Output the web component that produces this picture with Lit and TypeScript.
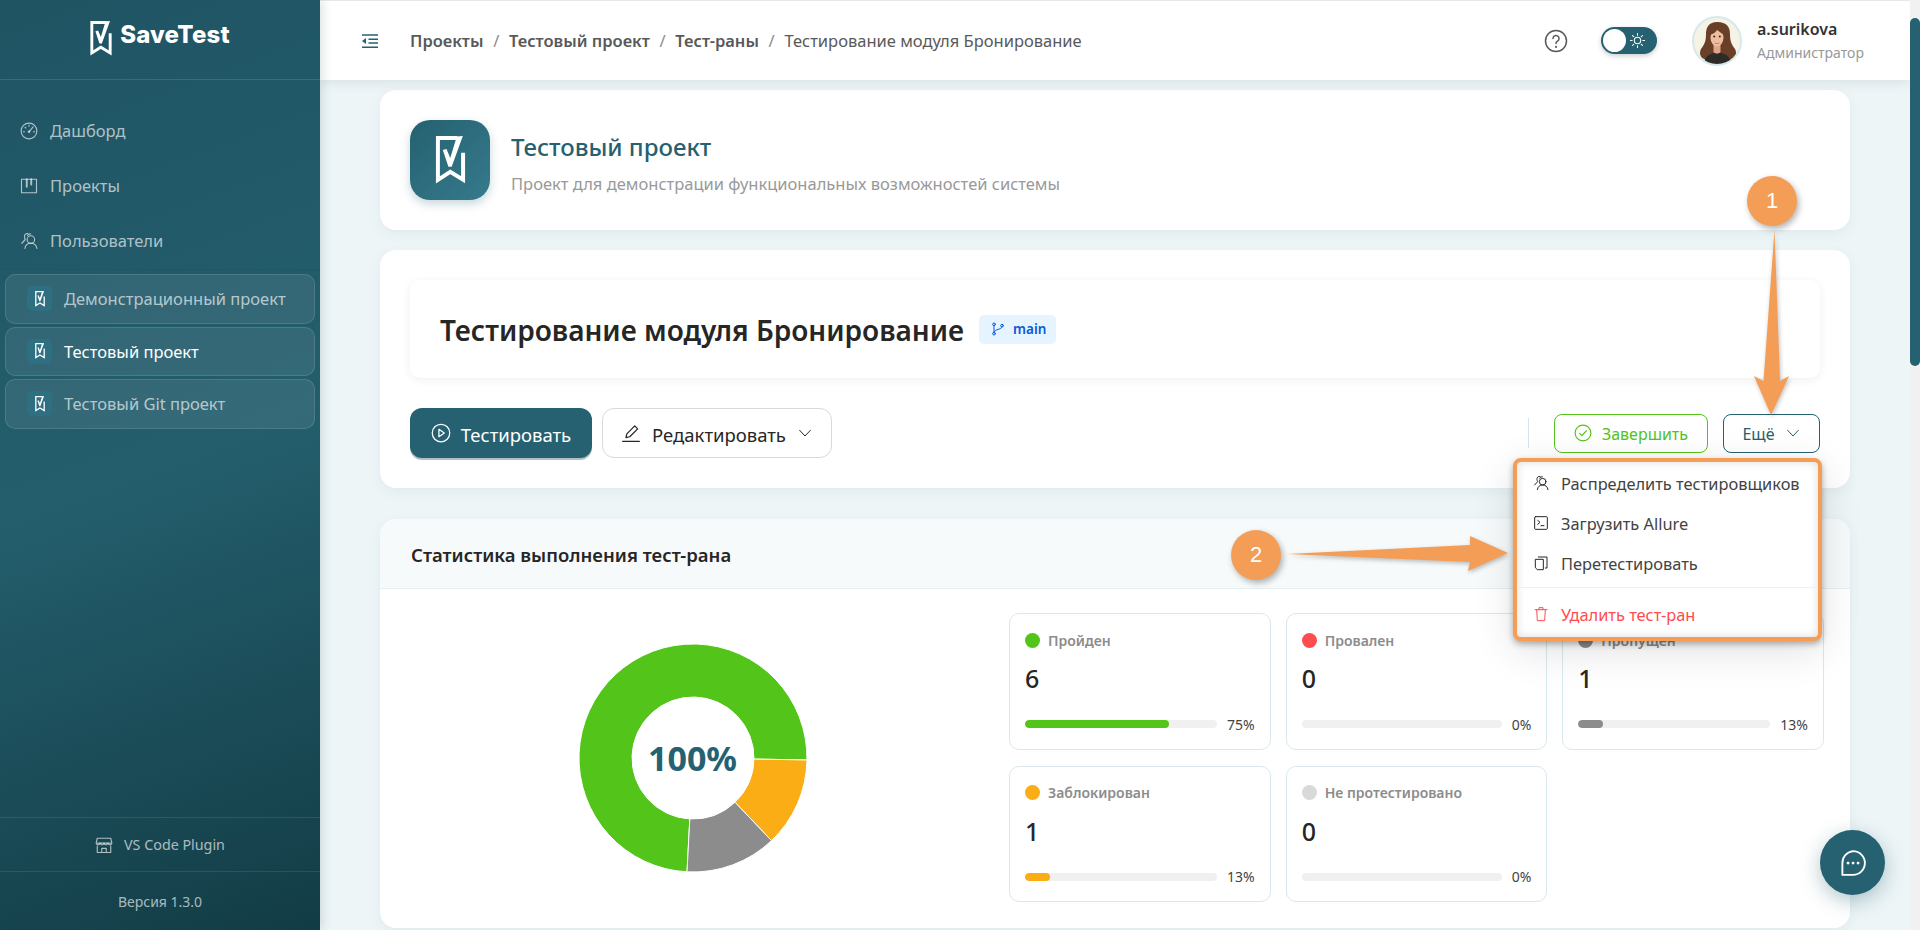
import { LitElement, html, css, svg } from "lit";
import { customElement } from "lit/decorators.js";

const logo = (cls: string) => html`<svg class=${cls} viewBox="0 0 63 103">
  <path d="M46 4.500H4.500V94L31 77L58.500 94V36" fill="none" stroke="currentColor" stroke-width="8.500" stroke-miterlimit="8" />
  <path d="M15 30L23 28L31 47L45 1L58 0L34 66H27Z" fill="currentColor" />
</svg>`;

const ico = (body: unknown, cls = "") => html`<svg class=${cls} viewBox="0 0 24 24" fill="none" stroke="currentColor" stroke-width="1.5" stroke-linecap="round" stroke-linejoin="round">${body}</svg>`;

const users = svg`<circle cx="14.500" cy="10" r="5" /><path d="M6.500 22c.6-4.600 3.600-7 8-7s7.400 2.400 8 7" /><path d="M10 4.500A5 5 0 0 1 14 2.500M10.500 2C7.500 1.500 5.500 4 6 7c.2 1.200.6 2 1 3L2.500 15" />`;
const gauge = svg`<circle cx="12" cy="12" r="10.500" /><path d="M4.500 13H6M18 13h1.500M12 4v1.500M6.800 7l1 1M17.500 6.500L12.500 12.500" /><circle cx="12" cy="13" r="1" />`;
const board = svg`<rect x="2" y="3" width="20" height="18" /><path d="M9 3v10M15 3v7" stroke-width="2.500" />`;
const terminal = svg`<rect x="2.500" y="2.500" width="19" height="19" rx="1.500" /><path d="M7 8l3.500 3L7 14M12 16h4.500" />`;
const copy = svg`<path d="M8 3h13v16.500h-2.500" /><path d="M4 6.500h11.500V22H6.500L4 19.500z" />`;
const trash = svg`<path d="M3 5.500h18M9 5.500V2.500h6v3M5.500 5.500L6.500 22h11l1-16.500" />`;
const chevron = svg`<path d="M4 8l8 8.500L20 8" />`;
const store = svg`<path d="M3 3h18l1.500 6.500c-.5 3-4.500 3-5.300 0-.8 3-4.400 3-5.200 0-.8 3-4.400 3-5.200 0-.8 3-4.800 3-5.300 0z" /><path d="M3 9.500h18M3 13.500V22h18v-8.500M9 22v-5.500h6V22" />`;

const NAV = [
  { name: "Дашборд", icon: gauge },
  { name: "Проекты", icon: board },
  { name: "Пользователи", icon: users },
];
const PROJECTS = [
  { name: "Демонстрационный проект", active: false },
  { name: "Тестовый проект", active: true },
  { name: "Тестовый Git проект", active: false },
];
const STATS = [
  { label: "Пройден", value: 6, pct: 75, color: "#52c41a" },
  { label: "Провален", value: 0, pct: 0, color: "#ff4d4f" },
  { label: "Пропущен", value: 1, pct: 13, color: "#8c8c8c" },
  { label: "Заблокирован", value: 1, pct: 13, color: "#faad14" },
  { label: "Не протестировано", value: 0, pct: 0, color: "#d9d9d9" },
];
const SLICES = [
  { from: 183, to: 451, color: "#52c41a" },
  { from: 91, to: 136.5, color: "#faad14" },
  { from: 136.5, to: 183, color: "#8c8c8c" },
];

function arc(from: number, to: number, R: number, r: number, c: number) {
  const pt = (a: number, rad: number) => {
    const t = (a * Math.PI) / 180;
    return `${(c + rad * Math.sin(t)).toFixed(2)} ${(c - rad * Math.cos(t)).toFixed(2)}`;
  };
  const large = to - from > 180 ? 1 : 0;
  return `M${pt(from, R)}A${R} ${R} 0 ${large} 1 ${pt(to, R)}L${pt(to, r)}A${r} ${r} 0 ${large} 0 ${pt(from, r)}Z`;
}

@customElement("app-root")
export class AppRoot extends LitElement {
  static styles = css`
    :host {
      display: flex;
      position: relative;
      width: 1920px;
      height: 930px;
      overflow: hidden;
      background: #edf5f7;
      font-family: "Noto Sans", sans-serif;
      color: #262626;
    }
    svg { display: block; flex: none; }

    /* sidebar */
    .sidebar {
      width: 320px;
      flex: none;
      display: flex;
      flex-direction: column;
      background: linear-gradient(160deg, #1f5463 0%, #245e6d 50%, #123c45 100%);
      box-shadow: 2px 0 10px rgba(0, 40, 50, 0.15);
      z-index: 3;
      color: rgba(255, 255, 255, 0.65);
    }
    .brand {
      height: 80px;
      box-sizing: border-box;
      border-bottom: 1px solid rgba(255, 255, 255, 0.12);
      display: flex;
      justify-content: center;
      align-items: center;
      gap: 8px;
      color: #fff;
      padding-bottom: 2px;
    }
    .brand-logo { width: 22px; height: 35px; }
    .brand-name {
      font-family: Inter, sans-serif;
      font-weight: 800;
      font-size: 24px;
      letter-spacing: 0.2px;
      margin-top: -8px;
    }
    .nav { padding-top: 23px; height: 190px; box-sizing: border-box; border-bottom: 1px solid rgba(0, 0, 0, 0.04); }
    .nav-item {
      height: 55px;
      display: flex;
      align-items: center;
      gap: 12px;
      padding-left: 20px;
      font-size: 16.500px;
    }
    .nav-item svg { width: 18px; height: 18px; }
    .projects { padding: 4px 5px 0; display: flex; flex-direction: column; gap: 3px; flex: 1; }
    .project {
      height: 49.500px;
      box-sizing: border-box;
      display: flex;
      align-items: center;
      gap: 12px;
      padding-left: 21px;
      border-radius: 10px;
      border: 1px solid rgba(255, 255, 255, 0.12);
      background: rgba(255, 255, 255, 0.08);
      font-size: 16.500px;
    }
    .project.active { color: #fff; }
    .project-icon {
      width: 25px;
      height: 25px;
      border-radius: 5px;
      background: #2f6f82;
      display: flex;
      align-items: center;
      justify-content: center;
      color: #fff;
    }
    .project-logo { width: 10px; height: 16px; }
    .plugin {
      height: 54px;
      box-sizing: border-box;
      border-top: 1px solid rgba(255, 255, 255, 0.1);
      display: flex;
      align-items: center;
      justify-content: center;
      gap: 11px;
      font-size: 14.300px;
    }
    .plugin svg { width: 18px; height: 18px; }
    .version {
      height: 59px;
      box-sizing: border-box;
      border-top: 1px solid rgba(255, 255, 255, 0.1);
      display: flex;
      align-items: center;
      justify-content: center;
      font-size: 14px;
    }

    /* main column */
    .main { flex: 1; min-width: 0; display: flex; flex-direction: column; }
    .topbar {
      height: 80px;
      flex: none;
      box-sizing: border-box;
      background: #fff;
      border-top: 1px solid #e8e8e8;
      box-shadow: 0 2px 12px rgba(0, 40, 50, 0.1);
      display: flex;
      align-items: center;
      padding: 0 0 0 42px;
      z-index: 2;
    }
    .collapse { width: 16px; height: 16px; color: #256170; margin-right: 32px; }
    .crumbs { display: flex; align-items: center; font-size: 16.500px; color: #595959; flex: 1; }
    .crumbs b { font-weight: 600; }
    .crumbs i { font-style: normal; margin: 0 9.700px; color: #8c8c8c; }
    .help { width: 24px; height: 24px; color: #595959; margin-right: 33px; }
    .toggle {
      width: 56px;
      height: 27px;
      border-radius: 14px;
      background: #256170;
      display: flex;
      align-items: center;
      padding: 0 2px;
      box-sizing: border-box;
      gap: 2px;
      color: #fff;
      box-shadow: 0 2px 5px rgba(0, 0, 0, 0.2);
      margin-right: 35px;
    }
    .knob { width: 23px; height: 23px; border-radius: 50%; background: #fff; }
    .toggle svg { width: 17px; height: 17px; margin-left: 1px; }
    .avatar { width: 50px; height: 50px; margin-right: 15px; }
    .user { width: 153px; }
    .user-name { font-size: 16px; font-weight: 600; color: #333; line-height: 24px; }
    .user-role { font-size: 14px; color: #999; line-height: 24px; }

    .content {
      flex: 1;
      min-height: 0;
      padding: 10px 60px 0;
      display: flex;
      flex-direction: column;
      gap: 20px;
    }
    .card {
      background: #fff;
      border-radius: 16px;
      box-shadow: 0 4px 14px rgba(0, 60, 80, 0.06);
      flex: none;
    }
    .project-card { height: 140px; display: flex; align-items: center; padding: 0 30px; gap: 21px; }
    .big-icon {
      width: 80px;
      height: 80px;
      border-radius: 20px;
      background: linear-gradient(135deg, #256170, #357a8c);
      box-shadow: 0 4px 10px rgba(37, 97, 112, 0.25);
      display: flex;
      align-items: center;
      justify-content: center;
      color: #fff;
    }
    .big-logo { width: 31px; height: 48px; }
    .project-text { padding-top: 7px; }
    .project-title { font-size: 24px; font-weight: 500; color: #256170; line-height: 30px; margin-bottom: 10px; }
    .project-sub { font-size: 16.500px; color: #999; line-height: 24px; }

    .run-card { position: relative; z-index: 1; padding: 30px; height: 238px; box-sizing: border-box; }
    .run-head {
      height: 98px;
      border-radius: 10px;
      box-shadow: 0 2px 10px rgba(0, 40, 50, 0.07);
      display: flex;
      align-items: center;
      padding-left: 30px;
      gap: 15px;
      margin-bottom: 30px;
    }
    .run-title { font-size: 28px; font-weight: 600; color: #262626; padding-top: 2px; }
    .tag {
      height: 29px;
      padding: 0 10px 0 11px;
      border-radius: 5px;
      background: #e6f4ff;
      color: #0958d9;
      display: flex;
      align-items: center;
      gap: 7px;
      font-size: 13.500px;
      font-weight: 600;
    }
    .tag svg { width: 16px; height: 16px; }
    .actions { display: flex; align-items: center; gap: 10px; height: 50px; }
    .btn {
      height: 50px;
      box-sizing: border-box;
      border-radius: 12px;
      display: flex;
      align-items: center;
      font-size: 18.500px;
      gap: 10px;
    }
    .btn span { padding-top: 3px; }
    .btn-primary {
      width: 182px;
      justify-content: center;
      background: #256170;
      color: #fff;
      box-shadow: 0 2px 0 rgba(0, 40, 50, 0.3);
    }
    .btn-primary svg { width: 20px; height: 20px; }
    .btn-edit { width: 230px; justify-content: center; background: #fff; border: 1px solid #d9d9d9; gap: 11px; }
    .btn-edit svg { width: 20px; height: 20px; }
    .btn-edit .chev { width: 16px; height: 16px; }
    .spacer { flex: 1; }
    .divider { width: 1px; height: 30px; background: #d5e6ea; margin-right: 15px; }
    .btn-small {
      height: 39px;
      border-radius: 8px;
      font-size: 16px;
      justify-content: center;
      background: #fff;
    }
    .btn-small span { padding-top: 2px; }
    .btn-finish { width: 154px; border: 1px solid #52c41a; color: #52c41a; margin-right: 5px; }
    .btn-finish svg { width: 18px; height: 18px; }
    .btn-more { width: 97px; border: 1px solid #256170; color: #256170; }
    .btn-more svg { width: 16px; height: 16px; }

    .menu {
      position: absolute;
      left: 1133px;
      top: 208px;
      width: 309px;
      height: 183px;
      box-sizing: border-box;
      background: #fff;
      border: 4px solid #f49d56;
      border-radius: 8px;
      padding: 1px 0;
      box-shadow: 0 3px 6px rgba(0, 0, 0, 0.3), 0 10px 40px rgba(0, 0, 0, 0.12), inset 0 0 8px rgba(0, 0, 0, 0.15);
      z-index: 4;
    }
    .menu-item {
      height: 40px;
      display: flex;
      align-items: center;
      gap: 12px;
      padding-left: 16px;
      font-size: 16.400px;
      color: #434343;
      white-space: nowrap;
    }
    .menu-item svg { width: 16px; height: 16px; color: #262626; }
    .menu-item.danger, .menu-item.danger svg { color: #ff4d4f; }
    .menu-sep { height: 1px; background: #eef1f2; margin: 4px 0 6px; }

    .stats-card { margin-top: 11px; height: 409px; overflow: hidden; display: flex; flex-direction: column; }
    .stats-head {
      height: 70px;
      flex: none;
      box-sizing: border-box;
      background: #f6fafb;
      border-bottom: 1px solid #e4eff2;
      display: flex;
      align-items: center;
      padding: 2px 0 0 31px;
      font-size: 18.500px;
      font-weight: 600;
      color: #262626;
    }
    .stats-body { flex: 1; display: flex; align-items: flex-start; padding: 24px 26px 0 0; }
    .donut-col { flex: 1; display: flex; justify-content: center; padding: 30px 4px 0 0; }
    .donut { display: grid; place-items: center; width: 230px; height: 230px; }
    .donut > * { grid-area: 1 / 1; }
    .donut svg { width: 230px; height: 230px; }
    .donut-label { font-size: 34px; font-weight: 700; color: #256170; }
    .stat-grid { width: 815px; flex: none; display: grid; grid-template-columns: repeat(3, 1fr); gap: 16px 15px; }
    .stat {
      height: 136.500px;
      box-sizing: border-box;
      border: 1px solid #d9e8ec;
      border-radius: 10px;
      padding: 0 15px;
      display: flex;
      flex-direction: column;
    }
    .stat-label {
      display: flex;
      align-items: center;
      gap: 8px;
      margin-top: 16px;
      height: 20px;
      font-size: 14px;
      font-weight: 600;
      color: #8c8c8c;
    }
    .dot { width: 15px; height: 15px; border-radius: 50%; }
    .stat-value { font-size: 25px; font-weight: 500; line-height: 32px; margin-top: 12px; color: #262626; }
    .stat-row { display: flex; align-items: center; gap: 10px; margin-top: 20.500px; font-size: 14px; color: #434343; }
    .track { flex: 1; height: 8px; border-radius: 4px; background: #f0f0f0; overflow: hidden; }
    .fill { height: 100%; border-radius: 4px; }

    .scrollbar { width: 10px; flex: none; background: #f1f1f1; padding-top: 18px; box-sizing: border-box; z-index: 2; }
    .thumb { height: 348px; background: #256170; border-radius: 5px; }

    .fab {
      position: absolute;
      left: 1820px;
      top: 830px;
      width: 65px;
      height: 65px;
      border-radius: 50%;
      background: #256170;
      box-shadow: 0 6px 20px rgba(37, 97, 112, 0.35);
      display: flex;
      align-items: center;
      justify-content: center;
      color: #fff;
      z-index: 5;
    }
    .fab svg { width: 30px; height: 30px; }

    /* annotations drawn over the screenshot */
    .arrows { position: absolute; inset: 0; width: 1920px; height: 930px; z-index: 6; pointer-events: none; filter: drop-shadow(1px 2px 2px rgba(0, 0, 0, 0.25)); }
    .badge {
      position: absolute;
      width: 50px;
      height: 50px;
      border-radius: 50%;
      background: #f49d56;
      color: #fff;
      font-family: "Liberation Sans", sans-serif;
      font-size: 22px;
      display: flex;
      align-items: center;
      justify-content: center;
      box-shadow: 2px 3px 6px rgba(0, 0, 0, 0.3);
      z-index: 7;
    }
    .badge-1 { left: 1747px; top: 176px; }
    .badge-2 { left: 1231px; top: 530px; }
  `;

  renderSidebar() {
    return html`<aside class="sidebar">
      <div class="brand">${logo("brand-logo")}<span class="brand-name">SaveTest</span></div>
      <div class="nav">
        ${NAV.map((n) => html`<div class="nav-item">${ico(n.icon)}<span>${n.name}</span></div>`)}
      </div>
      <div class="projects">
        ${PROJECTS.map(
          (p) => html`<div class="project ${p.active ? "active" : ""}">
            <span class="project-icon">${logo("project-logo")}</span><span>${p.name}</span>
          </div>`
        )}
      </div>
      <div class="plugin">${ico(store)}<span>VS Code Plugin</span></div>
      <div class="version">Версия 1.3.0</div>
    </aside>`;
  }

  renderTopbar() {
    return html`<header class="topbar">
      <svg class="collapse" viewBox="0 0 16 16" fill="none" stroke="currentColor" stroke-width="1.500">
        <path d="M0 2h16M6.500 6.300H16M6.500 10H16M0 14.200h16" />
        <path d="M4 5v6L0 8z" fill="currentColor" stroke="none" />
      </svg>
      <nav class="crumbs">
        <b>Проекты</b><i>/</i><b>Тестовый проект</b><i>/</i><b>Тест-раны</b><i>/</i><span>Тестирование модуля Бронирование</span>
      </nav>
      ${ico(svg`<circle cx="12" cy="12" r="10.500" /><path d="M9 9.500a3 3 0 1 1 4.500 2.600c-1 .6-1.500 1.200-1.500 2.400" /><path d="M12 17.800v.2" stroke-width="2" />`, "help")}
      <div class="toggle">
        <span class="knob"></span>
        ${ico(svg`<circle cx="12" cy="12" r="4.500" /><path d="M12 2v2.500M12 19.500V22M2 12h2.500M19.500 12H22M5 5l1.700 1.700M17.300 17.300L19 19M5 19l1.700-1.700M17.300 6.700L19 5" />`)}
      </div>
      <svg class="avatar" viewBox="0 0 50 50">
        <defs><clipPath id="av"><circle cx="25" cy="25" r="23" /></clipPath></defs>
        <circle cx="25" cy="25" r="24" fill="#f6f2e4" stroke="#d5e9ee" stroke-width="2" />
        <g clip-path="url(#av)">
          <path d="M25 6c-8 0-11 5-11 12 0 8-2 11-5 15-2 4-1 8 3 10 2 2 6 3 9 3h10c4 0 7-1 9-3 4-2 5-6 3-10-3-4-5-7-5-15 0-7-3-12-13-12z" fill="#6a3f28" />
          <path d="M12 50c0-8 4-12 10-13h7c6 1 10 5 10 13z" fill="#2d2b27" />
          <path d="M21.500 28h7v8c-2 2-5 2-7 0z" fill="#dfa588" />
          <ellipse cx="25" cy="21.500" rx="6.500" ry="9" fill="#edbda0" />
          <path d="M18 19c1-5 4-8 8-8 3 1 5 4 6 8-3-2-5-4-7-5-1 2-4 4-7 5z" fill="#6a3f28" />
          <path d="M22 26.500c1.800 1 4.200 1 6 0-1 1.800-5 1.800-6 0z" fill="#b9574f" />
          <circle cx="22.200" cy="20.500" r="1" fill="#3a2418" />
          <circle cx="27.800" cy="20.500" r="1" fill="#3a2418" />
        </g>
      </svg>
      <div class="user">
        <div class="user-name">a.surikova</div>
        <div class="user-role">Администратор</div>
      </div>
    </header>`;
  }

  renderRunCard() {
    return html`<section class="card run-card">
      <div class="run-head">
        <span class="run-title">Тестирование модуля Бронирование</span>
        <span class="tag">
          ${ico(svg`<circle cx="6" cy="5" r="2" /><circle cx="6" cy="19" r="2" /><circle cx="18" cy="7" r="2" /><path d="M6 7v10M18 9c0 4-12 3-12 8" />`)}
          main
        </span>
      </div>
      <div class="actions">
        <div class="btn btn-primary">
          ${ico(svg`<circle cx="12" cy="12" r="10.500" /><path d="M9.500 7.500l6.500 4.500-6.500 4.500z" />`)}
          <span>Тестировать</span>
        </div>
        <div class="btn btn-edit">
          ${ico(svg`<path d="M2 22h20M6 17.500l1-4.500L16.500 3.500l3.500 3.500L10.500 16.500z" />`)}
          <span>Редактировать</span>
          ${ico(chevron, "chev")}
        </div>
        <span class="spacer"></span>
        <span class="divider"></span>
        <div class="btn btn-small btn-finish">
          ${ico(svg`<circle cx="12" cy="12" r="10.500" /><path d="M7.500 12.500l3 3 6-6.500" />`)}
          <span>Завершить</span>
        </div>
        <div class="btn btn-small btn-more"><span>Ещё</span>${ico(chevron)}</div>
      </div>
      <div class="menu">
        <div class="menu-item">${ico(users)}<span>Распределить тестировщиков</span></div>
        <div class="menu-item">${ico(terminal)}<span>Загрузить Allure</span></div>
        <div class="menu-item">${ico(copy)}<span>Перетестировать</span></div>
        <div class="menu-sep"></div>
        <div class="menu-item danger">${ico(trash)}<span>Удалить тест-ран</span></div>
      </div>
    </section>`;
  }

  renderStats() {
    return html`<section class="card stats-card">
      <div class="stats-head">Статистика выполнения тест-рана</div>
      <div class="stats-body">
        <div class="donut-col">
          <div class="donut">
            <svg viewBox="0 0 230 230">
              ${SLICES.map(
                (s) => svg`<path d=${arc(s.from, s.to, 114, 61, 115)} fill=${s.color} stroke="#fff" stroke-width="1" />`
              )}
            </svg>
            <span class="donut-label">100%</span>
          </div>
        </div>
        <div class="stat-grid">
          ${STATS.map(
            (s) => html`<div class="stat">
              <div class="stat-label"><span class="dot" style="background:${s.color}"></span>${s.label}</div>
              <div class="stat-value">${s.value}</div>
              <div class="stat-row">
                <div class="track"><div class="fill" style="width:${s.pct}%;background:${s.color}"></div></div>
                <span>${s.pct}%</span>
              </div>
            </div>`
          )}
        </div>
      </div>
    </section>`;
  }

  render() {
    return html`
      ${this.renderSidebar()}
      <div class="main">
        ${this.renderTopbar()}
        <div class="content">
          <section class="card project-card">
            <div class="big-icon">${logo("big-logo")}</div>
            <div class="project-text">
              <div class="project-title">Тестовый проект</div>
              <div class="project-sub">Проект для демонстрации функциональных возможностей системы</div>
            </div>
          </section>
          ${this.renderRunCard()}
          ${this.renderStats()}
        </div>
      </div>
      <div class="scrollbar"><div class="thumb"></div></div>
      <div class="fab">
        ${ico(svg`<path d="M12 2.500a9.500 9.500 0 1 1 0 19H3.500v-9A9.500 9.500 0 0 1 12 2.500z" /><path d="M8 12h.1M12 12h.1M16 12h.1" stroke-width="2.200" />`)}
      </div>
      <svg class="arrows" viewBox="0 0 1920 930">
        <path d="M1774.500 230L1780 381L1789 376L1771 415L1754 376L1763.500 381Z" fill="#f49d56" />
        <path d="M1287 554L1470 545L1470 536L1508 553L1468 571L1470 562Z" fill="#f49d56" />
      </svg>
      <div class="badge badge-1">1</div>
      <div class="badge badge-2">2</div>
    `;
  }
}
